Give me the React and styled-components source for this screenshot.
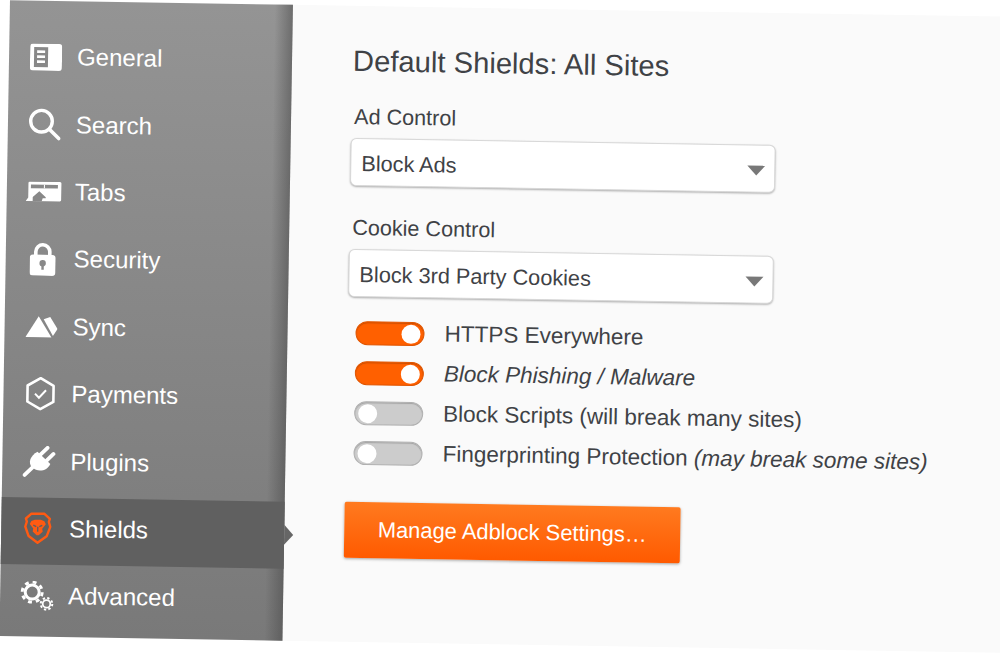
import React from "react";
import styled, { createGlobalStyle } from "styled-components";

const Global = createGlobalStyle`
  html, body { margin: 0; padding: 0; background: #fff; height: 100%; overflow: hidden; }
  body { font-family: "Liberation Sans", Arial, sans-serif; }
`;

const Stage = styled.div`
  display: flex;
  width: 1040px;
  height: 636px;
  padding-left: 10px;
  transform-origin: 0 0;
  transform: rotate(0.95deg);
`;

const Sidebar = styled.nav`
  position: relative;
  flex: none;
  box-sizing: border-box;
  width: 283px;
  padding-top: 25px;
  background: linear-gradient(180deg, #949494 0%, #797979 100%);
  &::after {
    content: "";
    position: absolute;
    inset: 0 0 0 auto;
    width: 18px;
    background: linear-gradient(90deg, rgba(70, 70, 70, 0) 0%, rgba(70, 70, 70, 0.5) 100%);
    pointer-events: none;
  }
`;

const NavRow = styled.div`
  position: relative;
  z-index: 1;
  display: flex;
  align-items: center;
  height: 67.4px;
  padding-bottom: 5px;
  box-sizing: border-box;
  background: ${(p) => (p.$active ? "#606060" : "transparent")};
  color: #fff;
  font-size: 24px;
  &::after {
    content: ${(p) => (p.$active ? '""' : "none")};
    position: absolute;
    top: 50%;
    right: -9px;
    margin-top: -10px;
    border-style: solid;
    border-width: 10px 0 10px 9px;
    border-color: transparent transparent transparent #666;
  }
`;

const IconSlot = styled.span`
  flex: none;
  display: flex;
  align-items: center;
  justify-content: center;
  width: 41px;
  margin-left: 16px;
  margin-right: 11px;
`;

const Main = styled.main`
  flex: 1;
  box-sizing: border-box;
  padding: 38px 0 0 60px;
  background: #fafafa;
  color: #3f4246;
`;

const Title = styled.h1`
  margin: 0 0 26px 1px;
  font-size: 29.2px;
  line-height: 34px;
  font-weight: 400;
`;

const Fields = styled.div`
  display: flex;
  flex-direction: column;
  gap: 29px;
`;

const FieldLabel = styled.div`
  margin: 0 0 8px 3px;
  font-size: 21.6px;
  line-height: 26px;
`;

const Select = styled.div`
  position: relative;
  display: flex;
  align-items: center;
  box-sizing: border-box;
  width: 425px;
  height: 48px;
  padding: 3px 0 0 10px;
  background: #fff;
  border: 1px solid #d8d8d8;
  border-radius: 6px;
  box-shadow: 0 1px 2px rgba(0, 0, 0, 0.3);
  font-size: 21.7px;
  &::after {
    content: "";
    position: absolute;
    right: 9px;
    top: 20px;
    border-style: solid;
    border-width: 10px 9.5px 0 9.5px;
    border-color: #787878 transparent transparent transparent;
  }
`;

const ToggleList = styled.div`
  margin: 16px 0 29px 8px;
`;

const ToggleRow = styled.div`
  display: flex;
  align-items: center;
  height: 40px;
`;

const Track = styled.span`
  position: relative;
  flex: none;
  box-sizing: border-box;
  width: 69px;
  height: 24px;
  border-radius: 12px;
  background: ${(p) => (p.$on ? "#ff6000" : "#cccccc")};
  border: 1px solid ${(p) => (p.$on ? "#e05500" : "#b0b0b0")};
  box-shadow: inset 0 1px 1px ${(p) => (p.$on ? "rgba(150,60,0,.5)" : "rgba(0,0,0,.2)")};
  &::after {
    content: "";
    position: absolute;
    top: 1.5px;
    ${(p) => (p.$on ? "right: 3px;" : "left: 3px;")}
    width: 19px;
    height: 19px;
    border-radius: 50%;
    background: #fff;
  }
`;

const ToggleLabel = styled.span`
  margin-left: 20px;
  font-size: 22.5px;
  font-style: ${(p) => (p.$italic ? "italic" : "normal")};
  white-space: nowrap;
`;

const Em = styled.em`
  font-style: italic;
`;

const Button = styled.div`
  display: flex;
  align-items: center;
  justify-content: center;
  width: 336px;
  height: 56px;
  padding-bottom: 1px;
  box-sizing: border-box;
  border-radius: 2px;
  background: linear-gradient(180deg, #ff7a1f 0%, #ff5a00 100%);
  box-shadow: 0 1px 3px rgba(0, 0, 0, 0.35);
  color: #fff;
  font-size: 21.9px;
`;

const IconGeneral = () => (
  <svg width="32" height="27" viewBox="0 0 32 27">
    <rect width="32" height="27" rx="3" fill="#fff" />
    <rect x="4" y="3.5" width="14" height="20" fill="#888" />
    <path d="M7 8h8M7 13h8M7 18h8" stroke="#fff" strokeWidth="2.6" />
  </svg>
);
const IconSearch = () => (
  <svg width="33" height="33" viewBox="0 0 33 33" fill="none" stroke="#fff">
    <circle cx="13.5" cy="13.5" r="10.8" strokeWidth="3.4" />
    <path d="M21.5 21.5 31 30.5" strokeWidth="3.6" strokeLinecap="round" />
  </svg>
);
const IconTabs = () => (
  <svg width="36" height="20" viewBox="0 0 36 20">
    <path d="M4 0h30a1.5 1.5 0 0 1 1.5 1.5V18a1.500 1.500 0 0 1-1.500 1.500H0L2.500 16V1.500A1.500 1.500 0 0 1 4 0z" fill="#fff" />
    <rect x="5" y="3" width="27" height="3.6" fill="#888" />
    <rect x="18" y="3" width="1" height="3.6" fill="#fff" />
    <path d="M7 19.500v-4L13.500 9.500 20 15.500v1h-3l-1 3z" fill="#888" />
  </svg>
);
const IconLock = () => (
  <svg width="26" height="34" viewBox="0 0 26 34">
    <path d="M6 15V10a7 7 0 0 1 14 0v5" fill="none" stroke="#fff" strokeWidth="3.6" />
    <rect x="0" y="13" width="26" height="21" rx="3.500" fill="#fff" />
    <circle cx="13" cy="21.500" r="3.200" fill="#888" />
    <rect x="11.800" y="22" width="2.400" height="6" fill="#888" />
  </svg>
);
const IconSync = () => (
  <svg width="32" height="22" viewBox="0 0 32 22" fill="#fff">
    <path d="M13 0.500 26 21.500H0z" />
    <path d="M18 3.500 24.500 1 32 13 27.500 20z" />
  </svg>
);
const IconPayments = () => (
  <svg width="30" height="34" viewBox="0 0 30 34" fill="none" stroke="#fff">
    <path d="M15 1.500 28 9v16l-13 7.500L2 25V9z" strokeWidth="2.600" strokeLinejoin="round" />
    <path d="M9.500 17l4 4 7-7.500" strokeWidth="2" />
  </svg>
);
const IconPlug = () => (
  <svg width="34" height="32" viewBox="0 0 34 32">
    <path d="M15 6 28 18C25 25 16 27 10 22 5 17 8 10 15 6z" fill="#fff" />
    <path d="M18 9 25 2M24 15 31 8M10 22 2.500 29.500" stroke="#fff" strokeWidth="3.800" strokeLinecap="round" fill="none" />
  </svg>
);
const IconLion = () => (
  <svg width="29" height="33" viewBox="0 0 29 33">
    <path d="M8 2h13l5.500 5-1 3 1.500 5-3.500 9.500-9 6.500-9-6.500L2 15l1.500-5-1-3z" fill="none" stroke="#ff5a12" strokeWidth="2.400" strokeLinejoin="round" />
    <path d="M8 9.500 11.500 8h6L21 9.500 22.500 12.500 19 17l.5 3-4 3.500h-2l-4-3.500.5-3L6.500 12.500z" fill="#ff5a12" />
    <path d="M10 13.500l3 1.500M19 13.500l-3 1.500M14.500 15v5" stroke="#606060" strokeWidth="1.400" fill="none" />
  </svg>
);
const IconGears = () => (
  <svg width="34" height="30" viewBox="0 0 34 30" fill="none" stroke="#fff">
    <circle cx="12" cy="11.500" r="7" strokeWidth="3" />
    <circle cx="12" cy="11.500" r="10" strokeWidth="3" strokeDasharray="3.900 3.950" />
    <circle cx="26.500" cy="23" r="3.800" strokeWidth="1.800" />
    <circle cx="26.500" cy="23" r="5.800" strokeWidth="2" strokeDasharray="2.300 2.250" />
  </svg>
);

const navItems = [
  ["General", IconGeneral],
  ["Search", IconSearch],
  ["Tabs", IconTabs],
  ["Security", IconLock],
  ["Sync", IconSync],
  ["Payments", IconPayments],
  ["Plugins", IconPlug],
  ["Shields", IconLion],
  ["Advanced", IconGears],
];

const toggles = [
  { on: true, label: "HTTPS Everywhere" },
  { on: true, italic: true, label: "Block Phishing / Malware" },
  { on: false, label: "Block Scripts (will break many sites)" },
  { on: false, label: "Fingerprinting Protection ", note: "(may break some sites)" },
];

export default function App() {
  return (
    <>
      <Global />
      <Stage>
        <Sidebar>
          {navItems.map(([label, Icon]) => (
            <NavRow key={label} $active={label === "Shields"}>
              <IconSlot>
                <Icon />
              </IconSlot>
              {label}
            </NavRow>
          ))}
        </Sidebar>
        <Main>
          <Title>Default Shields: All Sites</Title>
          <Fields>
            <div>
              <FieldLabel>Ad Control</FieldLabel>
              <Select>Block Ads</Select>
            </div>
            <div>
              <FieldLabel>Cookie Control</FieldLabel>
              <Select>Block 3rd Party Cookies</Select>
            </div>
          </Fields>
          <ToggleList>
            {toggles.map((t) => (
              <ToggleRow key={t.label}>
                <Track $on={t.on} />
                <ToggleLabel $italic={t.italic}>
                  {t.label}
                  {t.note && <Em>{t.note}</Em>}
                </ToggleLabel>
              </ToggleRow>
            ))}
          </ToggleList>
          <Button>Manage Adblock Settings…</Button>
        </Main>
      </Stage>
    </>
  );
}
